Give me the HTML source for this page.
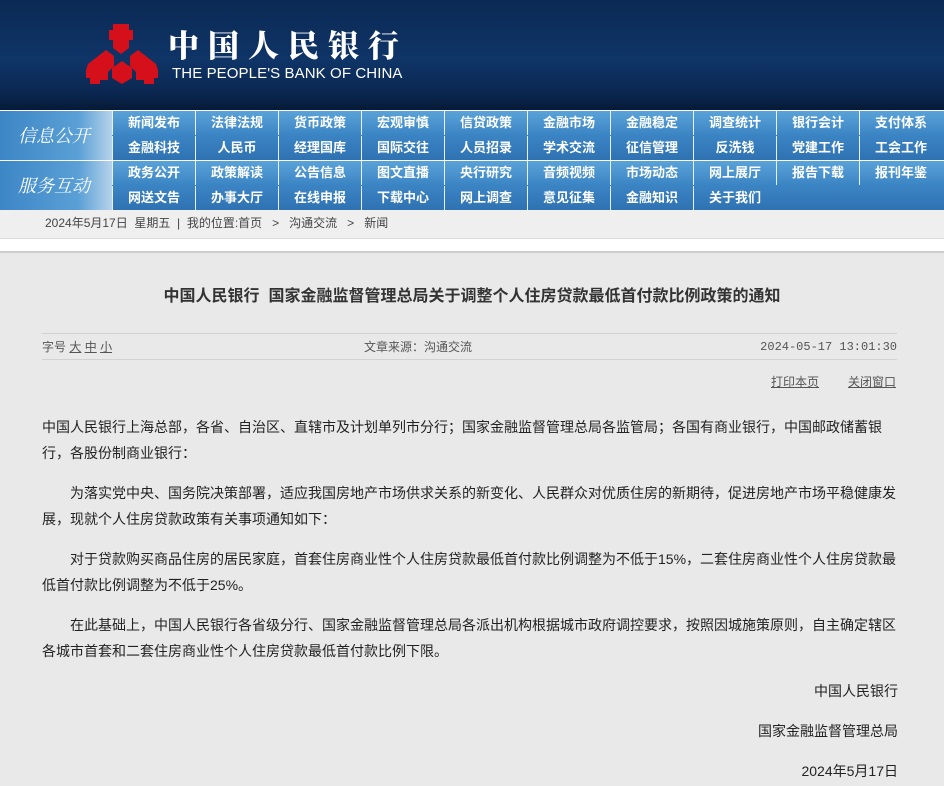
<!DOCTYPE html>
<html><head><meta charset="utf-8">
<style>
*{margin:0;padding:0;box-sizing:border-box}
html,body{width:944px;height:786px;overflow:hidden}
body{background:#e9e9e9;font-family:"Liberation Sans","Noto Sans CJK SC",sans-serif;color:#222;position:relative}
#hd{height:110px;background:linear-gradient(180deg,#0b2a55 0%,#0f3467 55%,#0a2750 85%,#061a36 100%);position:relative}
#hd .cn{position:absolute;left:168px;top:24px;color:#fff;font-family:"Noto Serif CJK SC",serif;font-weight:900;font-size:31px;letter-spacing:9px;line-height:40px}
#hd .en{position:absolute;left:172px;top:65px;color:#fff;font-size:15px;letter-spacing:0.1px;line-height:18px}
.nav{position:relative;height:50px;background:linear-gradient(180deg,#5aa3d8 0%,#3b84c4 50%,#2f72b2 100%);border-top:1px solid #fff}
.nav .lab{position:absolute;left:0;top:0;width:112px;height:49px;background:linear-gradient(90deg,#3d86c6 0%,#5aa0d6 70%,#b6d3ea 100%);color:#fff;font-style:italic;font-size:18px;line-height:49px;padding-left:18px;font-family:"Noto Serif CJK SC",serif}
.nav .c{position:absolute;width:83px;height:24px;color:#fff;font-weight:bold;font-size:13px;text-align:center;line-height:24px;border-left:1px solid #e8f1fa}
#bc{height:28px;background:#efefef;font-size:12px;color:#444;line-height:27px;padding-left:45px}
#wb{height:15px;background:#fff;border-top:1px solid #ddd;border-bottom:2px solid #ccc}
h1{position:absolute;top:282px;left:0;width:944px;text-align:center;font-size:16px;font-weight:bold;color:#333}
.meta{position:absolute;left:42px;top:333px;width:855px;height:27px;border-top:1px solid #d2d2d2;border-bottom:1px solid #d2d2d2;font-size:12px;color:#555;line-height:27px}
.tool{position:absolute;top:373px;font-size:12px;color:#555;text-decoration:underline}
.bd{position:absolute;left:42px;top:414px;width:856px;font-size:14px;line-height:26px;color:#222}
.bd p{margin-bottom:14px}
.bd .r{text-align:right;margin-bottom:14px}
</style></head><body>
<div id="hd">
<svg style="position:absolute;left:86px;top:24px" width="72" height="62" viewBox="0 0 72 62">
<g fill="#d6101a">
<path d="M27 0h16v6h4v10h-4v8l-8 6-8-6v-8h-4V6h4z"/>
<path d="M2 40l18-14 8 6v10l-6 6v8h-8v4H4v-6H0v-8z"/>
<path d="M70 40L52 26l-8 6v10l6 6v8h8v4h10v-6h4v-8z"/>
<path d="M26 44l10-7 10 7v10l-10 6-10-6z"/>
</g></svg>
<div class="cn">中国人民银行</div>
<div class="en">THE PEOPLE'S BANK OF CHINA</div>
</div>
<div class="nav"><div class="lab">信息公开</div>
<div class="c" style="left:112px;top:0">新闻发布</div><div class="c" style="left:195px;top:0">法律法规</div><div class="c" style="left:278px;top:0">货币政策</div><div class="c" style="left:361px;top:0">宏观审慎</div><div class="c" style="left:444px;top:0">信贷政策</div><div class="c" style="left:527px;top:0">金融市场</div><div class="c" style="left:610px;top:0">金融稳定</div><div class="c" style="left:693px;top:0">调查统计</div><div class="c" style="left:776px;top:0">银行会计</div><div class="c" style="left:859px;top:0">支付体系</div>
<div class="c" style="left:112px;top:25px">金融科技</div><div class="c" style="left:195px;top:25px">人民币</div><div class="c" style="left:278px;top:25px">经理国库</div><div class="c" style="left:361px;top:25px">国际交往</div><div class="c" style="left:444px;top:25px">人员招录</div><div class="c" style="left:527px;top:25px">学术交流</div><div class="c" style="left:610px;top:25px">征信管理</div><div class="c" style="left:693px;top:25px">反洗钱</div><div class="c" style="left:776px;top:25px">党建工作</div><div class="c" style="left:859px;top:25px">工会工作</div>
</div>
<div class="nav"><div class="lab">服务互动</div>
<div class="c" style="left:112px;top:0">政务公开</div><div class="c" style="left:195px;top:0">政策解读</div><div class="c" style="left:278px;top:0">公告信息</div><div class="c" style="left:361px;top:0">图文直播</div><div class="c" style="left:444px;top:0">央行研究</div><div class="c" style="left:527px;top:0">音频视频</div><div class="c" style="left:610px;top:0">市场动态</div><div class="c" style="left:693px;top:0">网上展厅</div><div class="c" style="left:776px;top:0">报告下载</div><div class="c" style="left:859px;top:0">报刊年鉴</div>
<div class="c" style="left:112px;top:25px">网送文告</div><div class="c" style="left:195px;top:25px">办事大厅</div><div class="c" style="left:278px;top:25px">在线申报</div><div class="c" style="left:361px;top:25px">下载中心</div><div class="c" style="left:444px;top:25px">网上调查</div><div class="c" style="left:527px;top:25px">意见征集</div><div class="c" style="left:610px;top:25px">金融知识</div><div class="c" style="left:693px;top:25px">关于我们</div>
</div>
<div id="bc">2024年5月17日&nbsp; 星期五 &nbsp;|&nbsp; 我的位置:首页 &nbsp;&nbsp;&gt;&nbsp;&nbsp; 沟通交流 &nbsp;&nbsp;&gt;&nbsp;&nbsp; 新闻</div>
<div id="wb"></div>
<h1>中国人民银行&nbsp; 国家金融监督管理总局关于调整个人住房贷款最低首付款比例政策的通知</h1>
<div class="meta"><span style="position:absolute;left:0">字号 <u>大</u> <u>中</u> <u>小</u></span><span style="position:absolute;left:322px">文章来源：沟通交流</span><span style="position:absolute;right:0;font-family:'Liberation Mono',monospace">2024-05-17 13:01:30</span></div>
<div class="tool" style="left:771px">打印本页</div><div class="tool" style="left:848px">关闭窗口</div>
<div class="bd">
<p>中国人民银行上海总部，各省、自治区、直辖市及计划单列市分行；国家金融监督管理总局各监管局；各国有商业银行，中国邮政储蓄银行，各股份制商业银行：</p>
<p>&emsp;&emsp;为落实党中央、国务院决策部署，适应我国房地产市场供求关系的新变化、人民群众对优质住房的新期待，促进房地产市场平稳健康发展，现就个人住房贷款政策有关事项通知如下：</p>
<p>&emsp;&emsp;对于贷款购买商品住房的居民家庭，首套住房商业性个人住房贷款最低首付款比例调整为不低于15%，二套住房商业性个人住房贷款最低首付款比例调整为不低于25%。</p>
<p>&emsp;&emsp;在此基础上，中国人民银行各省级分行、国家金融监督管理总局各派出机构根据城市政府调控要求，按照因城施策原则，自主确定辖区各城市首套和二套住房商业性个人住房贷款最低首付款比例下限。</p>
<div class="r">中国人民银行</div>
<div class="r">国家金融监督管理总局</div>
<div class="r">2024年5月17日</div>
</div>
</body></html>
